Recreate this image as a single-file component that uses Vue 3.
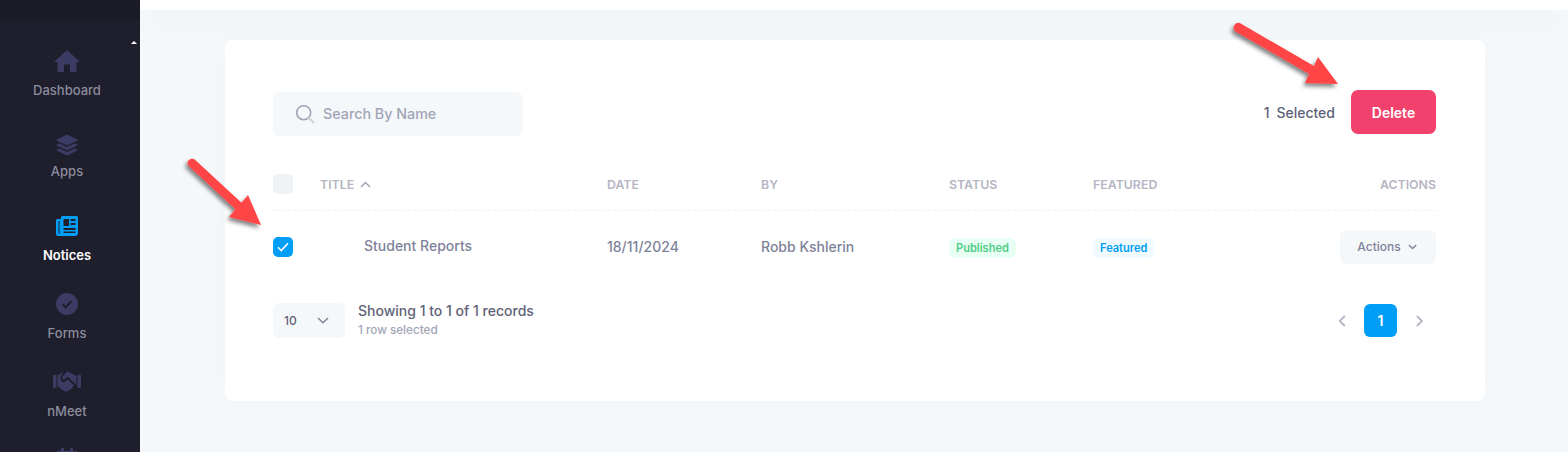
<template>
  <div class="page">
    <aside class="sidebar">
      <div class="brand"></div>
      <span class="scroll-up"></span>
      <nav class="menu">
        <a class="menu-item item-dashboard">
          <svg class="menu-icon" width="26" height="24" viewBox="0 0 26 24">
            <path d="M13 1 L25.5 12.4 Q25.8 13 25 13 H22.5 V22 Q22.5 23 21.5 23 H16 V15.5 H10 V23 H4.5 Q3.5 23 3.5 22 V13 H1 Q0.2 13 0.5 12.4 Z" />
          </svg>
          <span>Dashboard</span>
        </a>
        <a class="menu-item item-apps">
          <svg class="menu-icon" width="22" height="22" viewBox="0 0 22 22">
            <path d="M11 0.5 L21.5 5.5 Q22 6 21.5 6.5 L11 11.5 L0.5 6.5 Q0 6 0.5 5.5 Z" />
            <path d="M3.5 9.3 L11 12.9 L18.5 9.3 L21.5 10.7 Q22 11.1 21.5 11.5 L11 16.5 L0.5 11.5 Q0 11.1 0.5 10.7 Z" />
            <path d="M3.5 14.4 L11 18 L18.5 14.4 L21.5 15.8 Q22 16.2 21.5 16.6 L11 21.6 L0.5 16.6 Q0 16.2 0.5 15.8 Z" />
          </svg>
          <span>Apps</span>
        </a>
        <a class="menu-item item-notices active">
          <svg class="menu-icon" width="22" height="20" viewBox="0 0 22 20">
            <path fill-rule="evenodd" d="M5 1.5 Q5 0 6.5 0 H20.5 Q22 0 22 1.5 V17 Q22 20 19 20 H2.5 Q0 20 0 17.5 V4.5 Q0 3 1.5 3 H5 Z M2.5 5 V17.5 Q2.5 18 3 18 Q3.5 18 3.5 17.5 V5 Z M7.5 3 V10 H13 V3 Z M14.5 3 V5 H19.5 V3 Z M14.5 7 V9 H19.5 V7 Z M7.5 12 V14 H19.5 V12 Z M7.5 15.5 V17 H19.5 V15.5 Z" />
          </svg>
          <span>Notices</span>
        </a>
        <a class="menu-item item-forms">
          <svg class="menu-icon" width="22" height="22" viewBox="0 0 22 22">
            <circle cx="11" cy="11" r="11" />
            <path class="tick" d="M6.5 11.3 L9.7 14.3 L15.5 8.2" />
          </svg>
          <span>Forms</span>
        </a>
        <a class="menu-item item-meet">
          <svg class="menu-icon" width="28" height="22" viewBox="0 0 28 22">
            <path d="M0 5 H3.5 V18 H0 Z M24.5 5 H28 V18 H24.5 Z" />
            <path d="M14 1.5 L9.5 6.5 Q8.8 9.5 11 9.8 L15 6.8 L21 12.8 L23.5 15 V6 L19 3.5 Z" />
            <path d="M10 2 L4.5 5.5 V15.5 L7.5 18.5 L12 21.5 Q14 22 15 20.8 L17.5 19.8 L21 15.5 L15 9.5 L11.5 12 Q7.5 12.5 7.3 7.5 Z" />
          </svg>
          <span>nMeet</span>
        </a>
        <a class="menu-item item-calendar">
          <svg class="menu-icon" width="22" height="22" viewBox="0 0 22 22">
            <path d="M5 0 H8 V3 H14 V0 H17 V3 H20 Q22 3 22 5 V20 Q22 22 20 22 H2 Q0 22 0 20 V5 Q0 3 2 3 H5 Z" />
          </svg>
        </a>
      </nav>
    </aside>

    <main class="content">
      <div class="topbar"></div>

      <section class="card">
        <div class="toolbar">
          <label class="search">
            <svg width="20" height="20" viewBox="0 0 20 20" fill="none">
              <circle cx="8.7" cy="8.7" r="7" stroke="#a1a5b7" stroke-width="1.6" />
              <path d="M14 14 L18.5 18.5" stroke="#cfd1da" stroke-width="1.8" stroke-linecap="round" />
            </svg>
            <input type="text" placeholder="Search By Name" />
          </label>
          <div class="bulk">
            <span class="selected-count">{{ selected.length }} Selected</span>
            <button class="delete-button" type="button">Delete</button>
          </div>
        </div>

        <div class="table">
          <div class="table-row table-head">
            <span class="checkbox"></span>
            <span class="sort-title">
              TITLE
              <svg width="11" height="7" viewBox="0 0 11 7" fill="none">
                <path d="M1 6 L5.5 1.5 L10 6" stroke="#a1a5b7" stroke-width="1.5" />
              </svg>
            </span>
            <span>DATE</span>
            <span>BY</span>
            <span>STATUS</span>
            <span>FEATURED</span>
            <span class="align-end">ACTIONS</span>
          </div>

          <div v-for="row in rows" :key="row.title" class="table-row table-body">
            <span class="checkbox checked">
              <svg width="12" height="10" viewBox="0 0 12 10" fill="none">
                <path d="M1 5.3 L4.3 8.5 L11 1.3" stroke="#fff" stroke-width="1.6" />
              </svg>
            </span>
            <span class="row-title">{{ row.title }}</span>
            <span>{{ row.date }}</span>
            <span>{{ row.by }}</span>
            <span class="badge-cell"><em class="badge badge-green">{{ row.status }}</em></span>
            <span class="badge-cell"><em class="badge badge-blue">{{ row.featured }}</em></span>
            <span class="align-end">
              <button class="actions-button" type="button">
                Actions
                <svg width="9" height="6" viewBox="0 0 9 6" fill="none">
                  <path d="M0.8 1 L4.5 4.5 L8.2 1" stroke="#7e8299" stroke-width="1.3" />
                </svg>
              </button>
            </span>
          </div>
        </div>

        <div class="table-footer">
          <div class="page-size">
            <span>10</span>
            <svg width="12" height="7" viewBox="0 0 12 7" fill="none">
              <path d="M1 1 L6 5.8 L11 1" stroke="#7e8299" stroke-width="1.5" />
            </svg>
          </div>
          <div class="records">
            <div class="records-count">Showing 1 to 1 of 1 records</div>
            <div class="records-selected">1 row selected</div>
          </div>
          <div class="pagination">
            <svg width="8" height="12" viewBox="0 0 8 12" fill="none">
              <path d="M6.8 1 L1.8 6 L6.8 11" stroke="#b5b5c3" stroke-width="1.8" />
            </svg>
            <span class="page-current">1</span>
            <svg width="8" height="12" viewBox="0 0 8 12" fill="none">
              <path d="M1.9 1 L6.9 6 L1.9 11" stroke="#b5b5c3" stroke-width="1.8" />
            </svg>
          </div>
        </div>
      </section>
    </main>

    <!-- annotation arrows sit on top of the page -->
    <svg class="annotations" width="1568" height="452" viewBox="0 0 1568 452">
      <defs>
        <filter id="arrow-shadow" x="-20%" y="-20%" width="150%" height="150%">
          <feDropShadow dx="-2" dy="3" stdDeviation="2" flood-color="#000" flood-opacity="0.5" />
        </filter>
      </defs>
      <g fill="#ff4545" filter="url(#arrow-shadow)">
        <path d="M1234.7 31 Q1232 26 1236 23.6 Q1238 22.4 1239.8 23 L1314 66 L1318 57 L1338 84 L1305 83 L1309.2 74 Z" />
        <path d="M189 166.3 Q186 163 188.7 160.2 Q192 157.5 195 159.7 L241.5 202.8 L248 195 L261 225 L229 217 L235.5 209.2 Z" />
      </g>
    </svg>
  </div>
</template>

<script setup>
const rows = [
  {
    title: "Student Reports",
    date: "18/11/2024",
    by: "Robb Kshlerin",
    status: "Published",
    featured: "Featured",
  },
];

const selected = [rows[0]];
</script>

<style>
html,
body {
  margin: 0;
  overflow: hidden;
  background: #f5f8fa;
}
</style>

<style scoped>
.page {
  position: relative;
  display: flex;
  width: 1568px;
  height: 452px;
  overflow: hidden;
  background: #f5f8fa;
  font-family: Inter, "Liberation Sans", sans-serif;
}

.sidebar {
  position: relative;
  flex: 0 0 140px;
  background: #1e1e2d;
}

.brand {
  height: 20px;
  background: #1b1b28;
}

.scroll-up {
  position: absolute;
  top: 41px;
  left: 131px;
  border-left: 3px solid transparent;
  border-right: 3px solid transparent;
  border-bottom: 3px solid #fff;
}

.menu {
  display: flex;
  flex-direction: column;
  align-items: center;
  padding: 29px 6px 0 0;
}

.menu-item {
  display: flex;
  flex-direction: column;
  align-items: center;
  flex: none;
  color: #8c8c9c;
  font-size: 13px;
  font-weight: 500;
  line-height: 16px;
}

.item-dashboard {
  gap: 9px;
}

.item-apps {
  gap: 7px;
  margin-top: 36px;
}

.item-notices {
  gap: 11px;
  margin-top: 37px;
}

.item-forms {
  gap: 10px;
  margin-top: 30px;
}

.item-meet {
  gap: 11px;
  margin-top: 29px;
}

.item-calendar {
  margin-top: 29px;
}

.menu-icon {
  flex: none;
  fill: #3b3b64;
}

.tick {
  fill: none;
  stroke: #1e1e2d;
  stroke-width: 2;
}

.menu-item.active {
  color: #fff;
  font-weight: 600;
}

.menu-item.active .menu-icon {
  fill: #009ef7;
}

.content {
  flex: 1;
  min-width: 0;
}

.topbar {
  height: 10px;
  background: #fff;
  box-shadow: 0 10px 30px rgba(30, 30, 45, 0.04);
}

.card {
  margin: 30px 83px 0 85px;
  height: 361px;
  box-sizing: border-box;
  padding: 50px 49px 0 48px;
  background: #fff;
  border-radius: 8px;
  box-shadow: 0 0 20px rgba(76, 87, 125, 0.02);
}

.toolbar {
  display: flex;
  justify-content: space-between;
  align-items: flex-start;
  height: 62px;
}

.search {
  display: flex;
  align-items: center;
  gap: 8px;
  box-sizing: border-box;
  width: 250px;
  height: 44px;
  margin-top: 2px;
  padding-left: 22px;
  background: #f5f8fa;
  border-radius: 7px;
}

.search svg {
  flex: none;
}

.search input {
  flex: 1;
  min-width: 0;
  padding: 0 0 2px;
  border: 0;
  outline: 0;
  background: transparent;
  font-family: inherit;
  font-size: 14.3px;
  font-weight: 500;
}

.search input::placeholder {
  color: #a1a5b7;
  opacity: 1;
}

.bulk {
  display: flex;
  align-items: center;
  gap: 16px;
}

.selected-count {
  color: #5e6278;
  font-size: 14px;
  font-weight: 500;
  word-spacing: 3px;
}

.delete-button {
  width: 85px;
  height: 44px;
  padding: 0;
  border: 0;
  border-radius: 7px;
  background: #f1416c;
  color: #fff;
  font-family: inherit;
  font-size: 14px;
  font-weight: 600;
}

.table-row {
  display: grid;
  grid-template-columns: 47px 287px 154px 188px 144px 100px 1fr;
  align-items: center;
}

.table-head {
  height: 59px;
  box-sizing: border-box;
  border-bottom: 1px dashed #eff2f5;
  padding-top: 6px;
  color: #b5b5c3;
  font-size: 12.35px;
  font-weight: 600;
}

.table-body {
  height: 71px;
  color: #7e8299;
  font-size: 14px;
  font-weight: 500;
}

.align-end {
  text-align: right;
}

.checkbox {
  display: flex;
  align-items: center;
  justify-content: center;
  width: 20px;
  height: 20px;
  border-radius: 5px;
  background: #eff2f5;
}

.checkbox.checked {
  background: #009ef7;
}

.sort-title {
  display: flex;
  align-items: center;
  gap: 6px;
}

.row-title {
  padding-left: 44px;
  margin-bottom: 2px;
}

.badge-cell {
  margin-top: 2px;
}

.badge {
  display: inline-block;
  padding: 0 7px;
  border-radius: 6px;
  font-size: 11.05px;
  font-style: normal;
  font-weight: 600;
  line-height: 20px;
}

.badge-green {
  background: #e8fff3;
  color: #50cd89;
}

.badge-blue {
  background: #f1faff;
  color: #009ef7;
}

.actions-button {
  display: inline-flex;
  align-items: center;
  justify-content: center;
  gap: 7px;
  width: 96px;
  height: 34px;
  padding: 0 2px 0 0;
  border: 0;
  border-radius: 6px;
  background: #f5f8fa;
  color: #7e8299;
  font-family: inherit;
  font-size: 12px;
  font-weight: 500;
}

.table-footer {
  display: flex;
  align-items: center;
  margin-top: 20px;
}

.page-size {
  display: flex;
  align-items: center;
  justify-content: space-between;
  box-sizing: border-box;
  width: 72px;
  height: 35px;
  padding: 0 16px 0 11px;
  border-radius: 6px;
  background: #f5f8fa;
  color: #5e6278;
  font-size: 12px;
  font-weight: 500;
}

.records {
  margin-left: 13px;
}

.records-count {
  color: #5e6278;
  font-size: 14px;
  font-weight: 500;
  line-height: 18px;
}

.records-selected {
  margin-top: 1px;
  color: #a1a5b7;
  font-size: 11.7px;
  font-weight: 500;
  line-height: 18px;
}

.pagination {
  display: flex;
  align-items: center;
  gap: 18px;
  margin-left: auto;
  margin-right: 13px;
}

.page-current {
  display: flex;
  align-items: center;
  justify-content: center;
  width: 33px;
  height: 33px;
  border-radius: 6px;
  background: #009ef7;
  color: #fff;
  font-size: 14px;
  font-weight: 600;
}

.annotations {
  position: absolute;
  top: 0;
  left: 0;
  pointer-events: none;
}
</style>
